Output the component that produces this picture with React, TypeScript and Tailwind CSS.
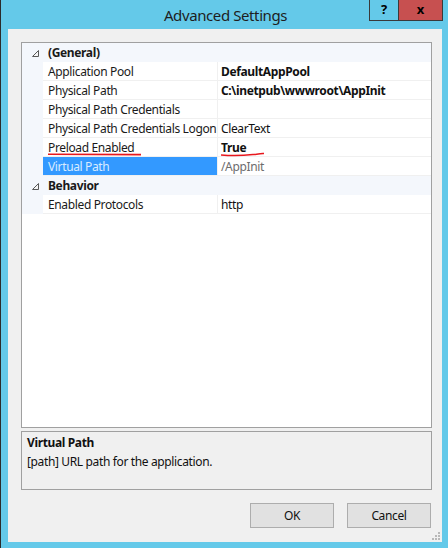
import React from "react";

type Row = {
  name: string;
  value?: string;
  bold?: boolean;
  selected?: boolean;
  mark?: boolean;
};

const general: Row[] = [
  { name: "Application Pool", value: "DefaultAppPool", bold: true },
  { name: "Physical Path", value: "C:\\inetpub\\wwwroot\\AppInit", bold: true },
  { name: "Physical Path Credentials", value: "" },
  { name: "Physical Path Credentials Logon", value: "ClearText" },
  { name: "Preload Enabled", value: "True", bold: true, mark: true },
  { name: "Virtual Path", value: "/AppInit", selected: true },
];

const behavior: Row[] = [{ name: "Enabled Protocols", value: "http" }];

function Arrow() {
  return (
    <svg width="7" height="7" viewBox="0 0 7 7" className="block">
      <polygon points="6.5,0.5 6.5,6.5 0.5,6.5" fill="#f6f6f6" stroke="#595959" strokeWidth="1" />
    </svg>
  );
}

function Category({ label }: { label: string }) {
  return (
    <div className="flex h-[19px] items-center bg-[#f4f7fc] pt-[1px]">
      <div className="flex w-[26px] justify-end pr-[9px]">
        <Arrow />
      </div>
      <span className="font-bold text-[#1a1a1a]">{label}</span>
    </div>
  );
}

function PropRow({ row }: { row: Row }) {
  return (
    <div className="flex h-[19px] bg-[#f4f7fc]">
      <div className="w-[21px] shrink-0" />
      <div
        className={
          row.selected
            ? "relative flex w-[174px] shrink-0 items-center overflow-hidden border-b border-[#f0f0f0] bg-[#3399ff] pl-[5px] pt-[1px] text-[#d9ecff]"
            : "relative flex w-[174px] shrink-0 items-center overflow-hidden border-b border-[#f0f0f0] bg-white pl-[5px] pt-[1px] text-[#1a1a1a]"
        }
      >
        <span className="whitespace-nowrap">{row.name}</span>
        {row.mark && (
          <svg width="96" height="3" viewBox="0 0 96 3" className="absolute left-[5px] top-[15px]">
            <path d="M0 1.3 L93 1.6" stroke="#e8171d" strokeWidth="1.6" fill="none" />
          </svg>
        )}
      </div>
      <div className="w-px shrink-0 bg-[#f0f0f0]" />
      <div
        className={
          row.selected
            ? "relative flex flex-1 items-center border-b border-[#f0f0f0] bg-white pl-[3px] pt-[1px] text-[#6d6d6d]"
            : "relative flex flex-1 items-center border-b border-[#f0f0f0] bg-white pl-[3px] pt-[1px] text-[#111]"
        }
      >
        <span className={row.bold ? "whitespace-nowrap font-bold" : "whitespace-nowrap"}>{row.value}</span>
        {row.mark && (
          <svg width="46" height="5" viewBox="0 0 46 5" className="absolute left-[3px] top-[14px]">
            <path d="M0 3 C10 3.8 22 3.6 32 2.6 C36 2.2 39 1.4 43 1.6" stroke="#e8171d" strokeWidth="1.5" fill="none" />
          </svg>
        )}
      </div>
    </div>
  );
}

export default function App() {
  return (
    <div
      className="relative h-[548px] w-[448px] overflow-hidden border-l border-[#2b2b2b] bg-[#64c9e9] text-[12px] tracking-[-0.36px]"
      style={{ fontFamily: '"Noto Sans", "Open Sans", sans-serif' }}
    >
      <div className="flex h-[29px] items-center justify-center pl-[2px] pt-[1px] text-[15px] tracking-[-0.4px] text-[#1e1e1e]">
        Advanced Settings
      </div>

      <div className="absolute right-[5px] top-0 flex h-[21px] tracking-normal">
        <div className="flex w-[29px] items-center justify-center border border-t-0 border-r-0 border-[#3a3a3a] bg-[#64c9e9] text-[13px] font-bold text-black">
          ?
        </div>
        <div className="flex w-[45px] items-center justify-center border border-t-0 border-[#3a3a3a] bg-[#c75050] text-[13px] font-bold text-black">
          x
        </div>
      </div>

      <div className="ml-[7px] flex h-[513px] w-[434px] flex-col bg-[#f0f0f0] pl-[13px] pt-[13px]">
        <div className="h-[386px] w-[411px] border border-[#a0a0a0] bg-white">
          <Category label="(General)" />
          {general.map((r) => (
            <PropRow key={r.name} row={r} />
          ))}
          <Category label="Behavior" />
          {behavior.map((r) => (
            <PropRow key={r.name} row={r} />
          ))}
        </div>

        <div className="mt-[3px] h-[59px] w-[411px] border border-[#a0a0a0] bg-[#f0f0f0] px-[5px] pt-[1px] leading-[19px] text-[#111]">
          <div className="font-bold">Virtual Path</div>
          <div>[path] URL path for the application.</div>
        </div>

        <div className="mt-[13px] flex w-[410px] justify-end gap-[13px]">
          <button className="h-[25px] w-[84px] border border-[#adadad] bg-[#e1e1e1] text-[12px] text-[#111]">OK</button>
          <button className="h-[25px] w-[84px] border border-[#adadad] bg-[#e1e1e1] text-[12px] text-[#111]">Cancel</button>
        </div>

        <div className="mt-auto flex justify-end pb-[2px] pr-[2px]">
          <svg width="10" height="10" viewBox="0 0 10 10">
            {[
              [8, 2],
              [5, 5],
              [8, 5],
              [2, 8],
              [5, 8],
              [8, 8],
            ].map(([x, y]) => (
              <rect key={`${x}-${y}`} x={x} y={y} width="2" height="2" fill="#b8b8b8" />
            ))}
          </svg>
        </div>
      </div>
    </div>
  );
}
